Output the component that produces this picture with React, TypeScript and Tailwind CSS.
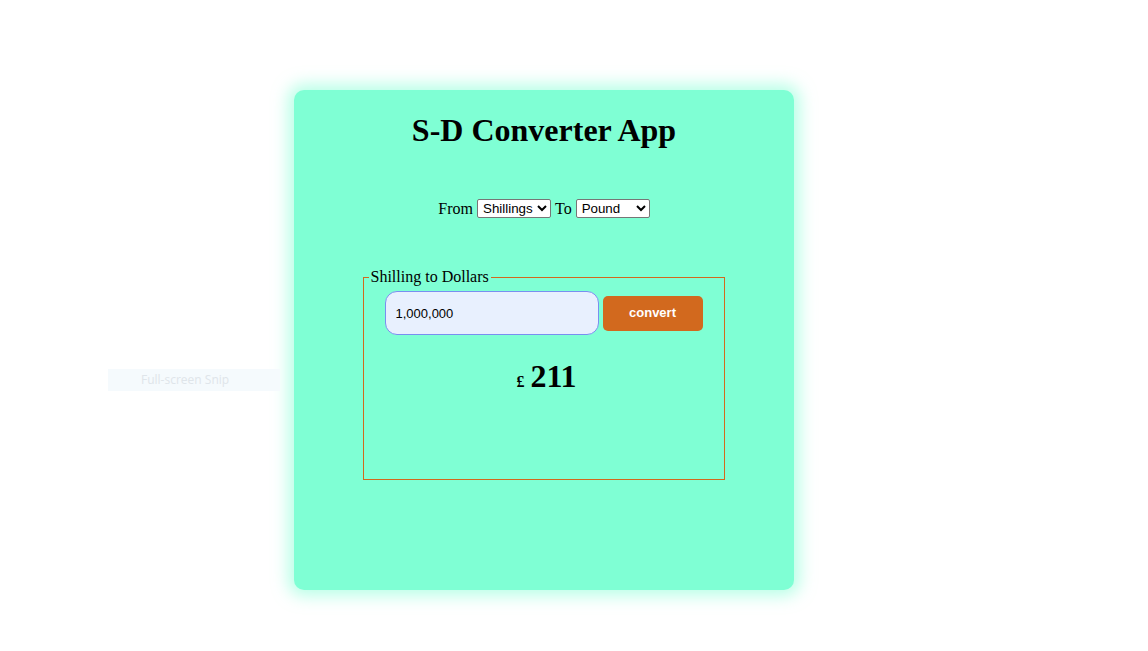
import React, { useState } from 'react';

const serif = "font-['Liberation_Serif','Times_New_Roman',serif]";
const sans = "font-['Liberation_Sans',Arial,sans-serif]";

export default function App() {
  const [from, setFrom] = useState('shillings');
  const [to, setTo] = useState('pound');
  const [amount, setAmount] = useState('1,000,000');

  return (
    <div className="relative w-[1148px] h-[651px] bg-white overflow-hidden">
      {/* leftover snipping tool label */}
      <div className="absolute left-[108px] top-[369px] w-[172px] h-[22px] bg-[#f5fafd] flex items-center pl-[33px] text-[12px] text-[#dfe5ea] font-['Open_Sans',sans-serif]">
        Full-screen Snip
      </div>

      <div className="pt-[90px] pl-[294px]">
        <div className={`w-[500px] h-[500px] bg-[#7fffd4] rounded-[10px] shadow-[0_0_16px_6px_rgba(127,255,212,0.55)] flex flex-col items-center pt-[112px] ${serif} text-black`}>
          <h1 className="text-[32px] font-bold leading-[37px] -mt-[90px]">S-D Converter App</h1>

          <div className="mt-[50px] flex items-center text-[16px] leading-[19px]">
            <span>From&nbsp;</span>
            <select
              value={from}
              onChange={(e) => setFrom(e.target.value)}
              className={`w-[74px] h-[19px] bg-white border border-[#767676] rounded-[2px] text-[13.33px] ${sans} text-black pl-[1px]`}
            >
              <option value="shillings">Shillings</option>
              <option value="dollars">Dollars</option>
            </select>
            <span>&nbsp;To&nbsp;</span>
            <select
              value={to}
              onChange={(e) => setTo(e.target.value)}
              className={`w-[74px] h-[19px] bg-white border border-[#767676] rounded-[2px] text-[13.33px] ${sans} text-black pl-[1px]`}
            >
              <option value="pound">Pound</option>
              <option value="dollar">Dollar</option>
              <option value="euro">Euro</option>
            </select>
          </div>

          <fieldset className="mt-[50px] w-[362px] h-[212px] border border-[#d2691e] -ml-[1px]">
            <legend className="ml-[5px] px-[2px] text-[16px] leading-[18px]">Shilling to Dollars</legend>
            <div className="flex items-center gap-[4px] pl-[21px] mt-[5px]">
              <input
                value={amount}
                onChange={(e) => setAmount(e.target.value)}
                className={`w-[214px] h-[44px] bg-[#e8f0fe] border border-[#7a8ff0] rounded-[12px] pl-[10px] text-[13px] ${sans} text-black outline-none`}
              />
              <button className={`w-[100px] h-[35px] bg-[#d2691e] rounded-[5px] text-white text-[13px] font-bold ${sans}`}>
                convert
              </button>
            </div>
            <div className="mt-[23px] flex items-baseline justify-center font-bold pl-[6px]">
              <span className="text-[16px]">£</span>
              <span className="text-[32px] leading-[37px] ml-[6px]">211</span>
            </div>
          </fieldset>
        </div>
      </div>
    </div>
  );
}
